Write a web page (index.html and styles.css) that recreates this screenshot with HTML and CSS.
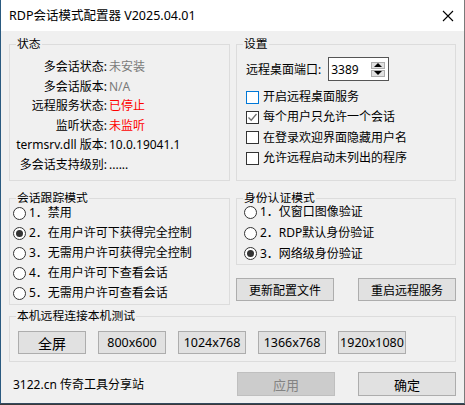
FILE: index.html
```html
<!DOCTYPE html>
<html lang="zh-CN">
<head>
  <meta charset="UTF-8">
  <title>RDP会话模式配置器</title>
  <link rel="stylesheet" href="styles.css">
</head>
<body>
  <div class="window">
    <div class="titlebar">
      <span class="title">RDP会话模式配置器 V2025.04.01</span>
      <svg class="close" width="12" height="12" viewBox="0 0 12 12">
        <path d="M1 1 L11 11 M11 1 L1 11" stroke="#000" stroke-width="1.1" fill="none"/>
      </svg>
    </div>

    <div class="content">
      <div class="row top-row">
        <div class="group status">
          <span class="caption">状态</span>
          <div class="kv">
            <span class="k">多会话状态:</span><span class="v gray">未安装</span>
            <span class="k">多会话版本:</span><span class="v gray">N/A</span>
            <span class="k">远程服务状态:</span><span class="v red">已停止</span>
            <span class="k">监听状态:</span><span class="v red">未监听</span>
            <span class="k">termsrv.dll 版本:</span><span class="v">10.0.19041.1</span>
            <span class="k">多会话支持级别:</span><span class="v">......</span>
          </div>
        </div>

        <div class="group settings">
          <span class="caption">设置</span>
          <div class="port">
            <span>远程桌面端口:</span>
            <div class="spin">
              <span class="spin-val">3389</span>
              <div class="spin-btns">
                <span class="spin-btn"><i class="tri up"></i></span>
                <span class="spin-btn"><i class="tri down"></i></span>
              </div>
            </div>
          </div>
          <div class="checks">
            <label class="check"><span class="box focus"></span>开启远程桌面服务</label>
            <label class="check"><span class="box"><svg width="11" height="11" viewBox="0 0 11 11"><path d="M1.5 5.5 L4.2 8.2 L9.5 2" stroke="#6e6e6e" stroke-width="1.3" fill="none"/></svg></span>每个用户只允许一个会话</label>
            <label class="check"><span class="box"></span>在登录欢迎界面隐藏用户名</label>
            <label class="check"><span class="box"></span>允许远程启动未列出的程序</label>
          </div>
        </div>
      </div>

      <div class="row mid-row">
        <div class="group track">
          <span class="caption">会话跟踪模式</span>
          <label class="radio"><span class="circle"></span>1．禁用</label>
          <label class="radio"><span class="circle on"></span>2．在用户许可下获得完全控制</label>
          <label class="radio"><span class="circle"></span>3．无需用户许可获得完全控制</label>
          <label class="radio"><span class="circle"></span>4．在用户许可下查看会话</label>
          <label class="radio"><span class="circle"></span>5．无需用户许可查看会话</label>
        </div>
        <div class="right-col">
          <div class="group auth">
            <span class="caption">身份认证模式</span>
            <label class="radio"><span class="circle"></span>1．仅窗口图像验证</label>
            <label class="radio"><span class="circle"></span>2．RDP默认身份验证</label>
            <label class="radio"><span class="circle on"></span>3．网络级身份验证</label>
          </div>
          <div class="actions">
            <button class="btn wide">更新配置文件</button>
            <button class="btn wide">重启远程服务</button>
          </div>
        </div>
      </div>

      <div class="group test">
        <span class="caption">本机远程连接本机测试</span>
        <div class="res">
          <button class="btn res-btn big">全屏</button>
          <button class="btn res-btn">800x600</button>
          <button class="btn res-btn">1024x768</button>
          <button class="btn res-btn">1366x768</button>
          <button class="btn res-btn">1920x1080</button>
        </div>
      </div>

      <div class="footer">
        <span class="site">3122.cn 传奇工具分享站</span>
        <div class="footer-btns">
          <button class="btn foot" disabled>应用</button>
          <button class="btn foot">确定</button>
        </div>
      </div>
    </div>
  </div>
</body>
</html>
```

FILE: styles.css
```css
* { box-sizing: border-box; }

body {
  margin: 0;
  width: 465px;
  height: 405px;
  background: #3a3a3a;
  font-family: "Noto Sans", "Noto Sans CJK SC", sans-serif;
  font-size: 12px;
  color: #000;
  overflow: hidden;
}

.window {
  width: 465px;
  height: 404px;
  background: #f0f0f0;
  border-left: 1px solid #2a5a80;
  border-right: 1px solid #7a7a7a;
  border-bottom: 1px solid #34495e;
}

.titlebar {
  height: 31px;
  background: #fff;
  display: flex;
  align-items: center;
  justify-content: space-between;
  padding: 0 9px 0 8px;
}
.title { font-size: 12.5px; line-height: 16px; }
.close { display: block; margin-right: 1px; }

.content { padding: 13px 8px 0 8px; }

.row {
  display: grid;
  grid-template-columns: 221px 220px;
  column-gap: 6px;
}
.mid-row { margin-top: 17px; }

.group {
  position: relative;
  border: 1px solid #dcdcdc;
}
.caption {
  position: absolute;
  top: -8px;
  left: 6px;
  padding: 0 1px;
  font-size: 11.8px;
  line-height: 12px;
  background: #f0f0f0;
}

/* 状态 */
.status { height: 137px; padding-top: 12px; }
.kv {
  display: grid;
  grid-template-columns: 97px 1fr;
  grid-auto-rows: 19.5px;
  line-height: 19.5px;
}
.k { text-align: right; white-space: nowrap; }
.v { padding-left: 2px; }
.gray { color: #7a7a7a; }
.red { color: #ff0000; }

/* 设置 */
.settings { height: 137px; padding: 12px 0 0 9px; }
.port { display: flex; align-items: center; gap: 7px; height: 24px; }
.spin {
  width: 61px;
  height: 24px;
  border: 1px solid #555;
  background: #fff;
  display: flex;
  align-items: center;
  justify-content: space-between;
  padding: 0 3px 0 2px;
}
.spin-btns { display: flex; flex-direction: column; gap: 1px; }
.spin-btn {
  width: 14px;
  height: 7px;
  background: #e1e1e1;
  border: 1px solid #adadad;
  display: flex;
  align-items: center;
  justify-content: center;
}
.tri { width: 0; height: 0; border-left: 4px solid transparent; border-right: 4px solid transparent; }
.tri.up { border-bottom: 4px solid #000; }
.tri.down { border-top: 4px solid #000; }

.checks { margin-top: 6px; }
.check { display: flex; align-items: center; height: 20.3px; line-height: 14px; }
.box {
  width: 13px;
  height: 13px;
  border: 1px solid #333;
  background: #fff;
  margin-right: 4px;
  display: flex;
  align-items: center;
  justify-content: center;
}
.box.focus { border-color: #0078d7; }

/* 单选 */
.track { height: 107px; padding: 4px 0 0 3px; }
.auth { height: 67px; padding: 3px 0 0 7px; }
.radio { display: flex; align-items: center; height: 20px; line-height: 14px; }
.auth .radio { height: 20.7px; }
.circle {
  width: 13px;
  height: 13px;
  border: 1px solid #333;
  border-radius: 50%;
  background: #fff;
  margin-right: 3px;
  display: flex;
  align-items: center;
  justify-content: center;
}
.circle.on::after {
  content: "";
  width: 7px;
  height: 7px;
  border-radius: 50%;
  background: #333;
}

.right-col { display: flex; flex-direction: column; }
.actions { display: flex; justify-content: space-between; margin-top: 13px; }

/* 按钮 */
.btn {
  font-family: inherit;
  font-size: 12px;
  color: #000;
  background: #e1e1e1;
  border: 1px solid #adadad;
  padding: 0;
  height: 23px;
}
.btn.wide { width: 98px; }
.btn:disabled { background: #cccccc; border-color: #bfbfbf; color: #838383; }

.test { margin-top: 11px; height: 46px; padding: 14px 0 0 8px; }
.res { display: flex; gap: 12px; }
.res-btn { width: 68px; font-size: 12.5px; }
.res-btn.big { font-size: 14px; }

.footer {
  margin-top: 10px;
  display: flex;
  align-items: center;
  justify-content: space-between;
  padding-left: 4px;
}
.footer-btns { display: flex; gap: 23px; }
.btn.foot { width: 98px; height: 24px; font-size: 13px; }
```
